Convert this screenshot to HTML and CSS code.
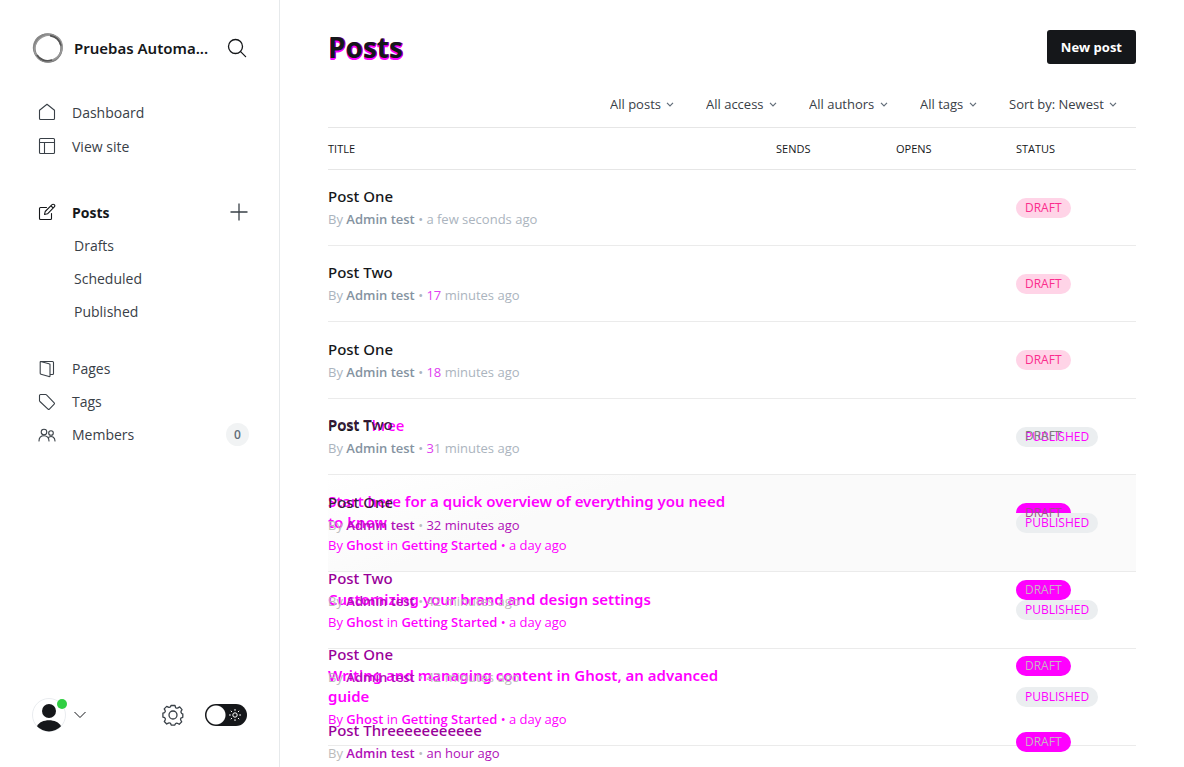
FILE: index.html
```html
<!DOCTYPE html>
<html lang="en">
<head>
<meta charset="utf-8">
<title>Posts</title>
<link rel="stylesheet" href="styles.css">
</head>
<body>
<div class="app">
  <nav class="sidebar">
    <header class="site">
      <svg class="site-logo" width="32" height="32" viewBox="0 0 32 32" fill="none">
        <circle cx="16" cy="16" r="13.6" stroke="#777" stroke-width="2.2"/>
        <ellipse cx="15.6" cy="16.4" rx="14" ry="13.4" stroke="#888" stroke-width="1.6" transform="rotate(35 16 16)"/>
        <ellipse cx="16.2" cy="15.6" rx="12.600" ry="14.2" stroke="#999" stroke-width="1.4" transform="rotate(60 16 16)"/>
        <path d="M18 3.6c6 1 10 5 11 10M5 23c3 5 9 7 15 5" stroke="#555" stroke-width="1.6"/>
      </svg>
      <span class="site-name">Pruebas Automa...</span>
      <button class="icon-button" aria-label="Search">
        <svg width="20" height="20" viewBox="0 0 20 20" fill="none" stroke="#15171a" stroke-width="1.3" stroke-linecap="round"><circle cx="8.5" cy="8.5" r="7"/><path d="M13.6 13.6l5 5"/></svg>
      </button>
    </header>

    <ul class="nav">
      <li><a href="#">
        <svg class="nav-icon" viewBox="0 0 18 18"><path d="M1.5 7.2L9 1.2l7.500 6v8.300a1 1 0 0 1-1 1h-13a1 1 0 0 1-1-1z"/></svg>Dashboard</a></li>
      <li><a href="#">
        <svg class="nav-icon" viewBox="0 0 18 18"><rect x="1.500" y="1.500" width="15" height="15" rx="1"/><path d="M1.500 5.500h15M6.500 5.500v11"/></svg>View site</a></li>
    </ul>

    <ul class="nav nav-posts">
      <li class="row"><a class="active" href="#">
        <svg class="nav-icon" viewBox="0 0 18 18"><path d="M8.500 4.500h-6a1 1 0 0 0-1 1v10a1 1 0 0 0 1 1h10a1 1 0 0 0 1-1v-5M6.500 11.500l.7-3 6.800-6.800a1.500 1.500 0 0 1 2.300 2.200L9.500 10.800zM13 2.800l2.200 2.200"/></svg>Posts</a>
        <button class="icon-button" aria-label="New post">
          <svg width="18" height="18" viewBox="0 0 18 18" fill="none" stroke="#394047" stroke-width="1.3"><path d="M9 0.500v17M0.500 9h17"/></svg>
        </button></li>
      <li><a class="sub" href="#">Drafts</a></li>
      <li><a class="sub" href="#">Scheduled</a></li>
      <li><a class="sub" href="#">Published</a></li>
    </ul>

    <ul class="nav nav-content">
      <li><a href="#">
        <svg class="nav-icon" viewBox="0 0 18 18"><path d="M2.500 1.500h12a1 1 0 0 1 1 1v11a1 1 0 0 1-1 1h-2.500M2.500 1.500l8.500 2.200a1 1 0 0 1 1 1v11.300a.6.6 0 0 1-1 .5l-8-2.200a1 1 0 0 1-.8-1v-11.300a.5.500 0 0 1 .3-.5z"/></svg>Pages</a></li>
      <li><a href="#">
        <svg class="nav-icon" viewBox="0 0 18 18"><path d="M1.500 2.500a1 1 0 0 1 1-1h5.300a1 1 0 0 1 .7.300l7.700 8a1 1 0 0 1 0 1.400l-4.800 4.900a1 1 0 0 1-1.400 0L1.900 8.500a1 1 0 0 1-.4-.7z"/></svg>Tags</a></li>
      <li class="row"><a href="#">
        <svg class="nav-icon" viewBox="0 0 18 18"><circle cx="6" cy="6" r="2.800"/><circle cx="13" cy="7" r="2.300"/><path d="M1 15c0-3.300 2-5.300 5-5.300s5 2 5 5.300M10.800 11.200c3-1.800 6.200.2 6.200 3.800"/></svg>Members</a>
        <span class="count">0</span></li>
    </ul>

    <footer class="account">
      <button class="user" aria-label="Account menu">
        <svg width="34" height="34" viewBox="0 0 34 34"><circle cx="17" cy="17" r="16.500" fill="#fff" stroke="#e9ecef"/><circle cx="17" cy="13" r="7" fill="#15171a"/><path d="M5 28.200c3.500-8 20.500-8 24 0a16.500 16.500 0 0 1-24 0z" fill="#15171a"/></svg>
        <span class="online"></span>
        <svg width="12" height="8" viewBox="0 0 12 8" fill="none" stroke="#15171a"><path d="M.5 1L6 6.500 11.500 1"/></svg>
      </button>
      <button class="icon-button settings" aria-label="Settings">
        <svg width="22" height="22" viewBox="0 0 22 22" fill="none" stroke="#394047" stroke-width="1.300" stroke-linejoin="round"><circle cx="11" cy="11" r="4"/><path d="M9 1.500h4l.6 2.200c1 .6 1.700.6 2.400.2l1.700-1L20 5.600l-1 1.800c-.2.900.2 1.600.8 2.200l1 .3v3.400l-1.800.7c-.6.800-.6 1.500-.2 2.200l.9 1.700-2.500 2.400-1.800-1c-.8-.3-1.500 0-2.100.6l-.5 1.200H9.200l-.7-1.800c-.7-.6-1.500-.6-2.200-.2l-1.600.9-2.400-2.500.9-1.600c.4-.8.200-1.600-.5-2.200l-1.800-.6V9.200l1.700-.6c.8-.7.900-1.500.5-2.200l-.9-1.500 2.500-2.500 1.600.8c.8.400 1.600.2 2.200-.4z"/></svg>
      </button>
      <label class="switch">
        <input type="checkbox" aria-label="Dark mode">
        <svg width="12" height="12" viewBox="0 0 12 12" fill="none" stroke="#fff"><circle cx="6" cy="6" r="2.200"/><path d="M6 0v1.800M6 10.200V12M0 6h1.800M10.200 6H12M1.800 1.800l1.200 1.200M9 9l1.200 1.200M10.200 1.800L9 3M3 9l-1.200 1.200"/></svg>
      </label>
    </footer>
  </nav>

  <main class="main">
    <header class="page-head">
      <h1>Posts</h1>
      <button class="primary">New post</button>
    </header>

    <div class="filters">
      <label class="filter"><select aria-label="Type"><option>All posts</option></select><svg class="caret" viewBox="0 0 8 5"><path d="M1 .8l3 3 3-3"/></svg></label>
      <label class="filter"><select aria-label="Access"><option>All access</option></select><svg class="caret" viewBox="0 0 8 5"><path d="M1 .8l3 3 3-3"/></svg></label>
      <label class="filter"><select aria-label="Author"><option>All authors</option></select><svg class="caret" viewBox="0 0 8 5"><path d="M1 .8l3 3 3-3"/></svg></label>
      <label class="filter"><select aria-label="Tag"><option>All tags</option></select><svg class="caret" viewBox="0 0 8 5"><path d="M1 .8l3 3 3-3"/></svg></label>
      <label class="filter"><select aria-label="Order"><option>Sort by: Newest</option></select><svg class="caret" viewBox="0 0 8 5"><path d="M1 .8l3 3 3-3"/></svg></label>
    </div>

    <div class="posts">
      <table>
        <thead>
          <tr><th>Title</th><th class="narrow">Sends</th><th class="narrow">Opens</th><th class="narrow">Status</th></tr>
        </thead>
        <tbody>
          <tr>
            <td><h3>Post One</h3><p>By <b>Admin test</b> • a few seconds ago</p></td><td></td><td></td>
            <td><span class="badge draft">Draft</span></td>
          </tr>
          <tr>
            <td><h3>Post Two</h3><p>By <b>Admin test</b> • <i class="changed">17</i> minutes ago</p></td><td></td><td></td>
            <td><span class="badge draft">Draft</span></td>
          </tr>
          <tr>
            <td><h3>Post One</h3><p>By <b>Admin test</b> • <i class="changed">18</i> minutes ago</p></td><td></td><td></td>
            <td><span class="badge draft">Draft</span></td>
          </tr>
          <tr>
            <td><h3>Post T<i class="new">hree</i></h3><p>By <b>Admin test</b> • <i class="changed">3</i>1 minutes ago</p></td><td></td><td></td>
            <td><span class="badge published">Published</span></td>
          </tr>
          <tr class="hovered">
            <td><h3 class="new">Start here for a quick overview of everything you need to know</h3><p class="new">By <b>Ghost</b> in <b>Getting Started</b> • a day ago</p></td><td></td><td></td>
            <td><span class="badge published">Published</span></td>
          </tr>
          <tr>
            <td><h3 class="new">Customizing your brand and design settings</h3><p class="new">By <b>Ghost</b> in <b>Getting Started</b> • a day ago</p></td><td></td><td></td>
            <td><span class="badge published">Published</span></td>
          </tr>
          <tr>
            <td><h3 class="new">Writing and managing content in Ghost, an advanced guide</h3><p class="new">By <b>Ghost</b> in <b>Getting Started</b> • a day ago</p></td><td></td><td></td>
            <td><span class="badge published">Published</span></td>
          </tr>
          <tr class="last">
            <td><h3 class="new">Building your audience with subscriber signups</h3></td><td></td><td></td>
            <td></td>
          </tr>
        </tbody>
      </table>

      <div class="previous">
        <div class="old-row">
          <div><h3 class="faded">Post Two</h3></div>
          <span class="badge old-plain">Draft</span>
        </div>
        <div class="old-row">
          <div><h3 class="faded">Post One</h3><p>By <b>Admin test</b> • <i>32 minutes ago</i></p></div>
          <span class="badge old-half">Draft</span>
        </div>
        <div class="old-row">
          <div><h3>Post Two</h3><p>By <b>Admin test</b> • 42 minutes ago</p></div>
          <span class="badge old">Draft</span>
        </div>
        <div class="old-row">
          <div><h3>Post One</h3><p>By <b>Admin test</b> • 42 minutes ago</p></div>
          <span class="badge old">Draft</span>
        </div>
        <div class="old-row">
          <div><h3>Post Threeeeeeeeeee</h3><p>By <b>Admin test</b> • <i>an hour ago</i></p></div>
          <span class="badge old">Draft</span>
        </div>
      </div>
    </div>
  </main>
</div>
</body>
</html>
```
FILE: styles.css
```css
* { box-sizing: border-box; }
body {
  margin: 0;
  font-family: "Open Sans", "Noto Sans", sans-serif;
  font-size: 14px;
  color: #15171a;
  background: #fff;
}
h1, h3, p, ul { margin: 0; padding: 0; }
ul { list-style: none; }
i { font-style: normal; }
button { border: 0; background: none; padding: 0; font: inherit; color: inherit; }
svg { display: block; flex: none; }

.app { display: flex; height: 100vh; overflow: hidden; }

/* Sidebar */
.sidebar {
  width: 280px;
  flex: none;
  display: flex;
  flex-direction: column;
  padding: 32px 30px 35px 32px;
  border-right: 1px solid #e6e9eb;
}
.site { display: flex; align-items: center; height: 32px; margin-bottom: 31px; }
.site-name {
  flex: 1;
  margin-left: 10px;
  font-family: "Noto Sans", sans-serif;
  font-size: 15px;
  font-weight: 600;
  line-height: 20px;
  white-space: nowrap;
}
.site .icon-button { margin-right: 2px; }
.nav { padding-left: 6px; }
.nav a {
  display: flex;
  align-items: center;
  gap: 16px;
  height: 34px;
  color: #394047;
  text-decoration: none;
}
.nav a.active { font-weight: 700; color: #15171a; }
.nav a.sub { padding-left: 36px; height: 33px; }
.nav-posts { margin-top: 32px; }
.nav-content { margin-top: 24px; }
.nav-content a { height: 33px; }
.row { display: flex; align-items: center; justify-content: space-between; }
.nav-posts .icon-button { margin-right: 1px; }
.nav-icon { width: 18px; height: 18px; fill: none; stroke: #394047; stroke-width: 1.1; stroke-linejoin: round; stroke-linecap: round; }
.active .nav-icon { stroke: #15171a; }
.count {
  width: 23px;
  height: 23px;
  border-radius: 12px;
  background: #f1f3f4;
  color: #626d79;
  font-size: 12px;
  font-weight: 600;
  line-height: 23px;
  text-align: center;
}
.account { display: flex; align-items: center; margin-top: auto; padding-right: 2px; }
.user { position: relative; display: flex; align-items: center; gap: 8px; }
.online {
  position: absolute;
  left: 25px;
  top: 1px;
  width: 10px;
  height: 10px;
  border-radius: 50%;
  background: #30cf43;
}
.settings { margin: 0 21px 0 auto; }
.switch { position: relative; display: block; height: 22px; }
.switch input {
  appearance: none;
  display: block;
  width: 42px;
  height: 22px;
  margin: 0;
  border-radius: 11px;
  background: radial-gradient(circle at 11px 11px, #fff 9px, #15171a 10px);
}
.switch svg { position: absolute; right: 6px; top: 5px; }

/* Main column */
.main { flex: 1; min-width: 0; padding: 30px 48px 0; overflow: hidden; }
.page-head { display: flex; justify-content: space-between; align-items: center; height: 34px; }
h1 {
  font-size: 28px;
  line-height: 34px;
  font-weight: 700;
  text-shadow: 0 1px #f0f, 1px 0 #a0a, 1px 1px #f0f, 0 2px #f0f;
}
.primary {
  height: 34px;
  padding: 0 14px;
  border-radius: 3px;
  background: #15171a;
  color: #fff;
  font-size: 13px;
  font-weight: 700;
}
.filters {
  display: flex;
  justify-content: flex-end;
  gap: 32px;
  padding: 28px 19px 11px 0;
}
.filter { display: flex; align-items: center; gap: 5px; height: 24px; }
.filter select {
  appearance: none;
  border: 0;
  padding: 0;
  background: none;
  font: inherit;
  font-size: 13px;
  color: #394047;
}
.caret { width: 8px; height: 5px; fill: none; stroke: #626d79; stroke-width: 1.2; }

/* Post list */
.posts { position: relative; }
table { width: 100%; table-layout: fixed; border-collapse: separate; border-spacing: 0; border-top: 1px solid #e6e6e6; }
th {
  height: 42px;
  padding: 0;
  border-bottom: 1px solid #e6e6e6;
  font-size: 11px;
  font-weight: 400;
  text-align: left;
  text-transform: uppercase;
}
.narrow { width: 120px; }
td { height: 76px; padding: 0; border-bottom: 1px solid #ebebeb; vertical-align: middle; }
td:first-child { padding: 16px 32px 16px 0; }
td:last-child { padding-bottom: 1px; }
tbody tr:nth-child(3n) td { height: 77px; }
.last td { vertical-align: top; }
.hovered { background: linear-gradient(160deg, #fff, #fafafa 30%); }
h3 { font-family: "Noto Sans", sans-serif; font-size: 15px; line-height: 21px; font-weight: 500; }
h3.new { font-weight: 600; }
p { margin-top: 3px; font-size: 13px; line-height: 19px; color: #abb4be; }
b { font-weight: 600; color: #8593a1; }
.changed { color: #e040f0; }
.new, .new b { color: #f0f; }
.badge {
  display: inline-block;
  height: 20px;
  padding: 0 9px;
  border-radius: 10px;
  font-size: 12px;
  line-height: 20px;
  text-transform: uppercase;
}
.draft { background: #ffd4e7; color: #fb2d8d; }
.published { background: #ebeef0; color: #f0f; font-weight: 500; }

/* Earlier revision of the list, drawn over the current one */
.previous { position: absolute; top: 272px; left: 0; right: 0; }
.old-row {
  display: grid;
  grid-template-columns: 1fr 120px;
  align-items: center;
  justify-items: start;
  height: 76px;
  padding-bottom: 1px;
}
.old-row:first-child { align-items: start; padding-top: 15px; }
.old-row:first-child .badge { margin-top: 12px; }
.old-row:nth-child(2) { height: 77px; }
.previous h3 { color: #909; }
.previous h3.faded { color: #3a1a3c; }
.previous p { color: #bbb; }
.previous b, .previous i { color: #b010b8; }
.old-plain { color: #7a8078; }
.old-half { background: linear-gradient(#f0f 50%, transparent 50%); color: #a0508c; }
.old { background: #f0f; color: #c8b4c4; }
```
